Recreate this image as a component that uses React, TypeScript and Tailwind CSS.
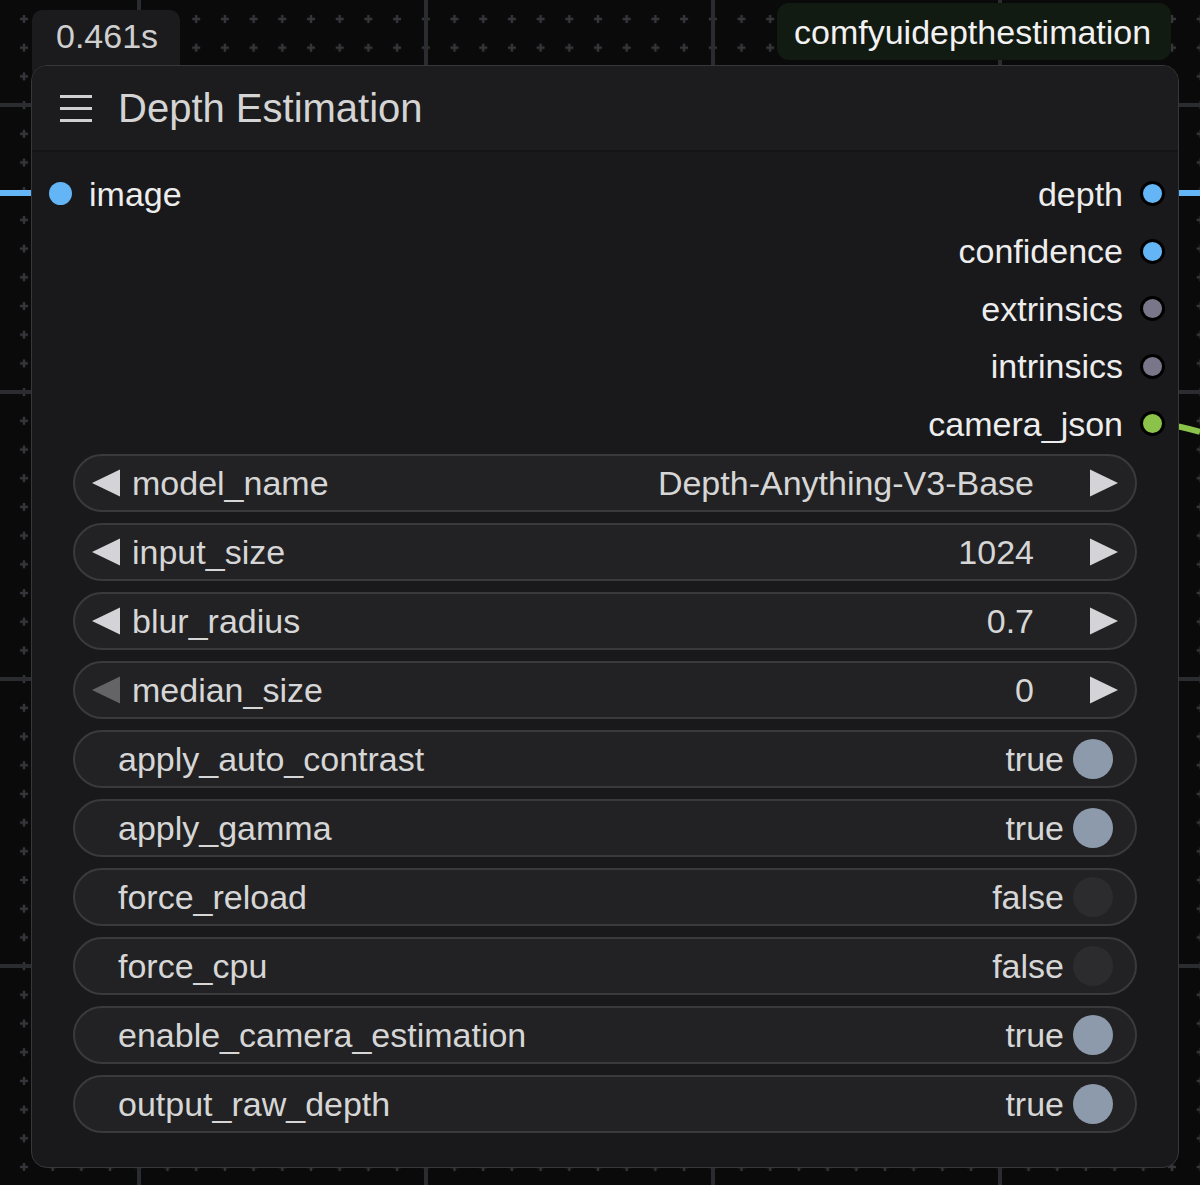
import React from 'react';

const outputs = [
  { name: 'depth', color: 'bg-[#64b5f6]' },
  { name: 'confidence', color: 'bg-[#64b5f6]' },
  { name: 'extrinsics', color: 'bg-[#787688]' },
  { name: 'intrinsics', color: 'bg-[#787688]' },
  { name: 'camera_json', color: 'bg-[#8bc34a]' },
];

const combos = [
  { name: 'model_name', value: 'Depth-Anything-V3-Base', leftDisabled: false },
  { name: 'input_size', value: '1024', leftDisabled: false },
  { name: 'blur_radius', value: '0.7', leftDisabled: false },
  { name: 'median_size', value: '0', leftDisabled: true },
];

const toggles = [
  { name: 'apply_auto_contrast', value: true },
  { name: 'apply_gamma', value: true },
  { name: 'force_reload', value: false },
  { name: 'force_cpu', value: false },
  { name: 'enable_camera_estimation', value: true },
  { name: 'output_raw_depth', value: true },
];

const CanvasGrid = () => (
  <svg className="absolute inset-0" width="1200" height="1185">
    <defs>
      <pattern id="plus" x="24" y="19" width="28.7" height="28.7" patternUnits="userSpaceOnUse">
        <rect x="-4" y="-1.2" width="8" height="2.4" fill="#35363a" />
        <rect x="-1.2" y="-4" width="2.4" height="8" fill="#35363a" />
        <rect x="24.7" y="-1.2" width="8" height="2.4" fill="#35363a" />
        <rect x="27.5" y="-4" width="2.4" height="8" fill="#35363a" />
        <rect x="-4" y="27.5" width="8" height="2.4" fill="#35363a" />
        <rect x="-1.2" y="24.7" width="2.4" height="8" fill="#35363a" />
        <rect x="24.7" y="27.5" width="8" height="2.4" fill="#35363a" />
        <rect x="27.5" y="24.7" width="2.4" height="8" fill="#35363a" />
      </pattern>
    </defs>
    <rect width="1200" height="1185" fill="url(#plus)" />
    {[139, 426, 713, 1000].map((x) => (
      <rect key={'v' + x} x={x - 2} y="0" width="4" height="1185" fill="#2a2c30" />
    ))}
    {[105, 392, 679, 966].map((y) => (
      <rect key={'h' + y} x="0" y={y - 2} width="1200" height="4" fill="#2a2c30" />
    ))}
    {/* links */}
    <path d="M0 193 H34" stroke="#64b5f6" strokeWidth="6" />
    <path d="M1170 193 H1200" stroke="#64b5f6" strokeWidth="6" />
    <path d="M1164 424 C1180 426 1190 429 1200 432" stroke="#8bc34a" strokeWidth="6" fill="none" />
  </svg>
);

const Arrow = ({ dir, disabled }: { dir: 'left' | 'right'; disabled?: boolean }) => (
  <svg width="28" height="28" viewBox="0 0 28 28" className="shrink-0">
    <polygon
      points={dir === 'left' ? '28,0.5 28,27.5 0,14' : '0,0.5 0,27.5 28,14'}
      fill={disabled ? '#646466' : '#d4d4d8'}
    />
  </svg>
);

const App = () => {
  return (
    <div className="relative w-[1200px] h-[1185px] overflow-hidden bg-[#0a0a0b] font-['Liberation_Sans',Arial,sans-serif]">
      <CanvasGrid />

      {/* execution time badge */}
      <div className="absolute left-[32px] top-[10px] w-[148px] h-[70px] rounded-[10px] bg-[#1b1b1d] pl-[24px] pt-[8px] text-[34px] leading-[36px] text-[#cfcfcf]">
        0.461s
      </div>

      {/* source badge */}
      <div className="absolute left-[777px] top-[3px] h-[57px] rounded-[12px] bg-[#121b12] pl-[17px] pr-[20px] flex items-center text-[34px] leading-none text-[#f2f2f2]">
        comfyuidepthestimation
      </div>

      {/* node */}
      <div className="absolute left-[31px] top-[65px] w-[1148px] h-[1103px] rounded-[16px] border border-[#37373a] bg-[#19191b] overflow-hidden">
        <div className="h-[86px] flex items-center pl-[28px] bg-[#1c1c1e] border-b-2 border-[#141415]">
          <div className="w-[32px] flex flex-col gap-[9px]">
            <div className="h-[3px] bg-[#d0d0d0]" />
            <div className="h-[3px] bg-[#d0d0d0]" />
            <div className="h-[3px] bg-[#d0d0d0]" />
          </div>
          <span className="ml-[26px] text-[40px] leading-none text-[#d4d4d4]">Depth Estimation</span>
        </div>

        <div className="pt-[13px]">
          {outputs.map((o, i) => (
            <div key={o.name} className="h-[57.5px] flex items-center justify-between">
              {i === 0 ? (
                <div className="flex items-center pl-[17px]">
                  <div className="w-[23px] h-[23px] rounded-full bg-[#64b5f6]" />
                  <span className="ml-[17px] text-[34px] leading-none text-[#ededed]">image</span>
                </div>
              ) : (
                <div />
              )}
              <div className="flex items-center pr-[13px]">
                <span className="text-[34px] leading-none text-[#ededed]">{o.name}</span>
                <div className={`ml-[17px] w-[25px] h-[25px] rounded-full border-[3px] border-black ${o.color}`} />
              </div>
            </div>
          ))}
        </div>

        <div className="pt-[1px] px-[41px] flex flex-col gap-[11px]">
          {combos.map((c) => (
            <div
              key={c.name}
              className="h-[58px] rounded-full border-2 border-[#3a3a3d] bg-[#222224] flex items-center pl-[17px] pr-[17px] text-[34px] leading-none text-[#d6d6d6]"
            >
              <Arrow dir="left" disabled={c.leftDisabled} />
              <span className="ml-[12px]">{c.name}</span>
              <span className="ml-auto">{c.value}</span>
              <span className="ml-[56px]">
                <Arrow dir="right" />
              </span>
            </div>
          ))}
          {toggles.map((t) => (
            <div
              key={t.name}
              className="h-[58px] rounded-full border-2 border-[#3a3a3d] bg-[#222224] flex items-center pl-[43px] pr-[22px] text-[34px] leading-none text-[#d6d6d6]"
            >
              <span>{t.name}</span>
              <span className="ml-auto">{t.value ? 'true' : 'false'}</span>
              <div
                className={`ml-[9px] w-[40px] h-[40px] rounded-full ${t.value ? 'bg-[#8c9aab]' : 'bg-[#2c2c2e]'}`}
              />
            </div>
          ))}
        </div>
      </div>
    </div>
  );
};

export default App;
